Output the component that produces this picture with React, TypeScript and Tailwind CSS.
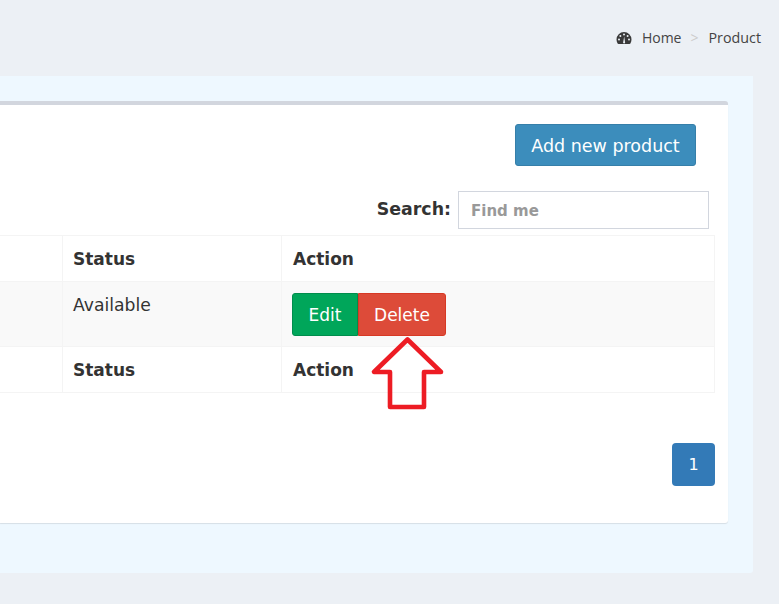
import React from "react";

const sans = "font-['DejaVu_Sans',Verdana,sans-serif]";

const HeaderRow = () => (
  <div className="grid grid-cols-[63px_219px_433px] h-full text-[#333] font-bold text-[17px]">
    <div className="border-r border-[#f4f4f4]" />
    <div className="border-r border-[#f4f4f4] pl-[10px] pt-[11px] leading-[24px]">Status</div>
    <div className="border-r border-[#f4f4f4] pl-[11px] pt-[11px] leading-[24px]">Action</div>
  </div>
);

const App: React.FC = () => {
  return (
    <div className={`relative w-[779px] h-[604px] overflow-hidden bg-[#ecf0f5] ${sans}`}>
      {/* BREADCRUMB */}
      <div className="h-[76px] flex justify-end items-start pt-[28px] pr-[18px] font-['Open_Sans',sans-serif] text-[14px] leading-[19px] text-[#444]">
        <svg viewBox="0 0 16 16" className="w-[16px] h-[16px] mt-[2px] mr-[10px]" fill="#3a3a3a">
          <path d="M8 2a7.5 7.5 0 0 0-7.5 7.5c0 1.5.4 2.8 1.1 4 .2.3.5.5.9.5h11c.4 0 .7-.2.9-.5.7-1.2 1.1-2.5 1.1-4A7.5 7.5 0 0 0 8 2z" />
          <circle cx="8" cy="4.6" r="1" fill="#ecf0f5" />
          <circle cx="4.4" cy="6" r="1" fill="#ecf0f5" />
          <circle cx="11.6" cy="6" r="1" fill="#ecf0f5" />
          <circle cx="3" cy="9.6" r="1" fill="#ecf0f5" />
          <circle cx="13" cy="9.6" r="1" fill="#ecf0f5" />
          <path d="M7.2 12l1-5.5 .8 5.5a1 1 0 1 1-1.8 0z" fill="#ecf0f5" />
        </svg>
        <span>Home</span>
        <span className="text-[#ccc] pl-[9px] pr-[10px]">&gt;</span>
        <span className="text-[14.3px]">Product</span>
      </div>

      {/* CONTENT PANEL */}
      <div className="w-[753px] h-[497px] bg-[#eef8ff] pt-[25px] pr-[25px] rounded-br-[3px]">
        {/* CARD */}
        <div className="h-[422px] bg-white border-t-[4px] border-[#d2d6de] rounded-r-[3px] shadow-[0_1px_1px_rgba(0,0,0,0.1)] pr-[13px]">
          <div className="flex justify-end pt-[19px] pr-[19px]">
            <button className="w-[181px] h-[42px] pt-[2px] bg-[#3c8dbc] border border-[#367fa9] rounded-[3px] text-white text-[17.5px]">
              Add new product
            </button>
          </div>

          {/* SEARCH */}
          <div className="flex justify-end items-center gap-[7px] mt-[25px] -mr-[7px] pr-[13px]">
            <label className="font-bold text-[17.4px] text-[#333] pb-[2px]">Search:</label>
            <input
              placeholder="Find me"
              className="w-[251px] h-[38px] border border-[#d2d6de] bg-white px-[12px] pt-[2px] text-[15px] font-bold placeholder:text-[#999] outline-none"
            />
          </div>

          {/* TABLE */}
          <div className="mt-[6px] border-t border-b border-[#f4f4f4] w-[715px]">
            <div className="h-[45px]">
              <HeaderRow />
            </div>
            <div className="grid grid-cols-[63px_219px_433px] h-[66px] bg-[#f9f9f9] border-y border-[#f4f4f4] text-[#333] text-[17.2px]">
              <div className="border-r border-[#f4f4f4]" />
              <div className="border-r border-[#f4f4f4] pl-[10px] pt-[11px] leading-[24px]">Available</div>
              <div className="border-r border-[#f4f4f4] pl-[10px] pt-[11px]">
                <div className="flex w-[154px] h-[43px] text-white text-[17px]">
                  <button className="w-[66px] pt-[2px] bg-[#00a65a] border border-[#008d4c] rounded-l-[3px]">Edit</button>
                  <button className="w-[88px] pt-[2px] bg-[#dd4b39] border border-[#d73925] rounded-r-[3px]">Delete</button>
                </div>
              </div>
            </div>
            <div className="h-[45px]">
              <HeaderRow />
            </div>
          </div>

          {/* PAGINATION */}
          <div className="flex justify-end mt-[50px]">
            <span className="w-[43px] h-[43px] flex items-center justify-center bg-[#337ab7] rounded-[4px] text-white text-[16px]">
              1
            </span>
          </div>
        </div>
      </div>

      {/* ARROW */}
      <svg className="absolute left-[366px] top-[332px] w-[82px] h-[80px]" viewBox="366 332 82 80">
        <polygon
          points="407.5,339.5 374,372 390,372 390,407 424,407 424,372 441,372"
          fill="none"
          stroke="#ed1c24"
          strokeWidth="4.6"
          strokeLinejoin="round"
        />
      </svg>
    </div>
  );
};

export default App;
